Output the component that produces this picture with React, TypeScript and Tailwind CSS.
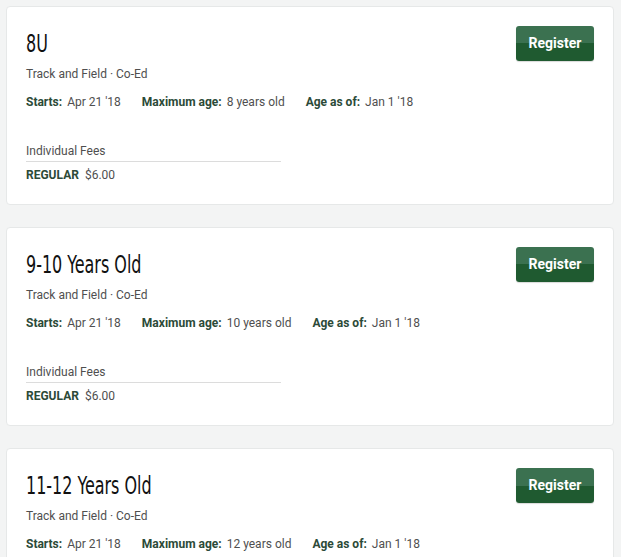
const SESSIONS = [
  { title: "8U", maxAge: "8 years old" },
  { title: "9-10 Years Old", maxAge: "10 years old" },
  { title: "11-12 Years Old", maxAge: "12 years old" },
];

function Detail({ label, value }: { label: string; value: string }) {
  return (
    <span className="flex items-baseline gap-[5px]">
      <span className="font-bold text-[#2c4a38]">{label}</span>
      <span className="text-[#4f4f4f]">{value}</span>
    </span>
  );
}

export default function App() {
  return (
    <div
      className="min-h-[557px] bg-[#f3f4f4] pt-[6px] pl-[6px] pr-[7px] flex flex-col gap-[22px]"
      style={{ fontFamily: "Roboto, 'Liberation Sans', sans-serif" }}
    >
      {SESSIONS.map((s) => (
        <div
          key={s.title}
          className="bg-white rounded-[4px] border border-[#e6e8e8] px-[19px] pt-[19px] pb-[20px] flex justify-between"
        >
          <div className="flex flex-col text-[12px]">
            <h2
              className="m-0 text-[24px] leading-[36px] font-normal text-[#111] origin-left scale-x-[0.74] whitespace-nowrap"
              style={{ fontFamily: "'DejaVu Sans Condensed', 'DejaVu Sans', sans-serif" }}
            >
              {s.title}
            </h2>
            <p className="m-0 mt-[3px] leading-[18px] text-[#4f4f4f]">
              Track and Field · Co-Ed
            </p>
            <div className="mt-[10px] leading-[18px] flex gap-[21px]">
              <Detail label="Starts:" value="Apr 21 '18" />
              <Detail label="Maximum age:" value={s.maxAge} />
              <Detail label="Age as of:" value="Jan 1 '18" />
            </div>
            <div className="mt-[31px] w-[255px] leading-[18px] text-[#4f4f4f] border-b border-[#dcdcdc] pb-px">
              Individual Fees
            </div>
            <div className="mt-[4px] leading-[18px] flex gap-[6px]">
              <span className="font-bold text-[#2c4a38]">REGULAR</span>
              <span className="text-[#4f4f4f]">$6.00</span>
            </div>
          </div>
          <button className="h-[35px] w-[78px] rounded-[3px] text-white font-bold text-[14px] bg-[linear-gradient(#3b7150_0%,#3b7150_50%,#1f5a30_50%,#1f5a30_100%)] shadow-[0_1px_1px_rgba(0,0,0,0.15)]">
            Register
          </button>
        </div>
      ))}
    </div>
  );
}
